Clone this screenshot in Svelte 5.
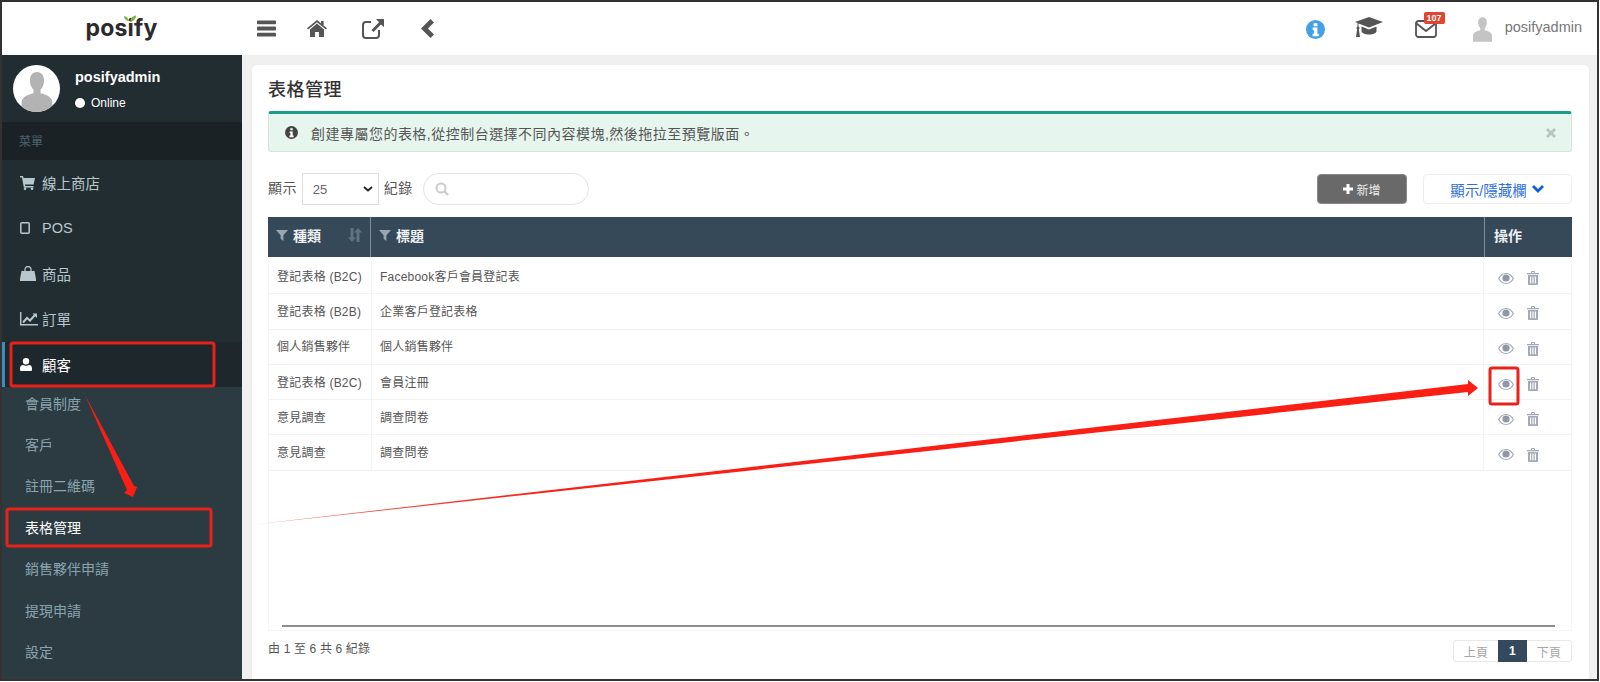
<script>
  const menu = [
    { label: '線上商店', icon: 'cart' },
    { label: 'POS', icon: 'tablet' },
    { label: '商品', icon: 'bag' },
    { label: '訂單', icon: 'chart' },
  ];
  const sub = ['會員制度', '客戶', '註冊二維碼', '表格管理', '銷售夥伴申請', '提現申請', '設定'];
  const rows = [
    ['登記表格 (B2C)', 'Facebook客戶會員登記表'],
    ['登記表格 (B2B)', '企業客戶登記表格'],
    ['個人銷售夥伴', '個人銷售夥伴'],
    ['登記表格 (B2C)', '會員注冊'],
    ['意見調查', '調查問卷'],
    ['意見調查', '調查問卷'],
  ];
</script>

{#snippet funnel()}
  <svg class="funnel" viewBox="0 0 12 12"><path d="M0 1h12L7.4 6.2V12L4.6 9.8V6.2z" fill="currentColor"/></svg>
{/snippet}

{#snippet person(cls)}
  <svg class={cls} viewBox="0 0 20 26"><path d="M10 0c3 0 4.6 2.4 4.6 5.6 0 2.6-1 4.6-2.3 6v2.2c3.6 1 7.7 2.2 7.7 6V26H0v-6.2c0-3.8 4.100-5 7.700-6v-2.200c-1.300-1.400-2.300-3.400-2.300-6C5.400 2.400 7 0 10 0z" fill="currentColor"/></svg>
{/snippet}

<div class="frame">
  <header class="top">
    <div class="brand">
      <span class="logo">posify</span>
      <svg class="leaf" viewBox="0 0 14 7"><path d="M6 7C5 3 3 1 0 1c0 3 2 5 6 6zM7.500 7c0-4 2.500-6 6.500-7 0 4-2 6.500-6.500 7z" fill="#7cb342"/></svg>
    </div>
    <nav class="tools">
      <svg class="t1" viewBox="0 0 20 17"><path d="M1 0h18a1 1 0 0 1 1 1v2a1 1 0 0 1-1 1H1a1 1 0 0 1-1-1V1a1 1 0 0 1 1-1zm0 6.500h18a1 1 0 0 1 1 1v2a1 1 0 0 1-1 1H1a1 1 0 0 1-1-1v-2a1 1 0 0 1 1-1zM1 13h18a1 1 0 0 1 1 1v2a1 1 0 0 1-1 1H1a1 1 0 0 1-1-1v-2a1 1 0 0 1 1-1z" fill="#555"/></svg>
      <svg class="t2" viewBox="0 0 20 17"><path d="M10 0l4 3.300V1h2.600v4.500L20 8.300l-1.100 1.300L10 2.300 1.100 9.600 0 8.300zM10 3.600l7 5.800V17h-5v-5H8v5H3V9.400z" fill="#555"/></svg>
      <svg class="t3" viewBox="0 0 22 20"><path d="M9 3H4a3 3 0 0 0-3 3v10a3 3 0 0 0 3 3h10a3 3 0 0 0 3-3v-5" fill="none" stroke="#555" stroke-width="2"/><path d="M14 0h8v8l-3-2.600-7.500 7.600-2-2L17 3.300z" fill="#555"/></svg>
      <svg class="t4" viewBox="0 0 13 19"><path d="M9.500 0L13 3.400 6.900 9.500 13 15.600 9.500 19 0 9.500z" fill="#555"/></svg>
    </nav>
    <div class="right">
      <svg class="r1" viewBox="0 0 20 20"><circle cx="10" cy="10" r="10" fill="#42a0e4"/><path d="M8 3.500h4v3H8zM7 8h5v6.500h1.500V17h-6.500v-2.500H8.300V10.500H7z" fill="#fff"/></svg>
      <svg class="r2" viewBox="0 0 28 20"><path d="M14 0l14 5-14 5.500L3.500 6.400V9.600c.6.300 1 .9 1 1.500 0 .5-.2 1-.6 1.300L5 20H1l1.100-7.600a1.700 1.700 0 0 1 .4-2.800V6L0 5z" fill="#555"/><path d="M6.500 9.500L14 12.500l7.500-3V14c0 2-3.500 3.500-7.500 3.500S6.500 16 6.500 14z" fill="#555"/></svg>
      <span class="mail">
        <svg viewBox="0 0 22 18"><rect x="1" y="1" width="20" height="16" rx="2.500" fill="none" stroke="#555" stroke-width="1.800"/><path d="M1.500 3.500L11 11l9.500-7.500" fill="none" stroke="#555" stroke-width="1.800"/></svg>
        <b>107</b>
      </span>
      {@render person('topuser')}
      <span class="uname">posifyadmin</span>
    </div>
  </header>

  <div class="body">
    <aside class="side">
      <div class="panel">
        <div class="avatar">{@render person('apic')}</div>
        <div class="who">
          <strong>posifyadmin</strong>
          <span class="status"><i></i>Online</span>
        </div>
      </div>
      <div class="head">菜單</div>
      <ul class="menu">
        {#each menu as m}
          <li>
            <span class="ic">
              {#if m.icon === 'cart'}
                <svg width="15" height="14" viewBox="0 0 15 14"><path d="M0 0h3l.5 2H15l-1.400 6.500H5l.3 1.500h8.200v1.500H3.800L2 1.500H0z" fill="currentColor"/><circle cx="5" cy="12.700" r="1.300" fill="currentColor"/><circle cx="12" cy="12.700" r="1.300" fill="currentColor"/></svg>
              {:else if m.icon === 'tablet'}
                <svg width="10" height="12" viewBox="0 0 10 12"><rect x=".8" y=".8" width="8.400" height="10.400" rx="1" fill="none" stroke="currentColor" stroke-width="1.500"/></svg>
              {:else if m.icon === 'bag'}
                <svg width="16" height="15" viewBox="0 0 16 15"><path d="M5 5V3.500a3 3 0 0 1 6 0V5" fill="none" stroke="currentColor" stroke-width="1.300"/><path d="M1.500 5h13L16 13v2H0v-2z" fill="currentColor"/></svg>
              {:else}
                <svg width="18" height="14" viewBox="0 0 18 14"><path d="M.7 0v12.800H18" fill="none" stroke="currentColor" stroke-width="1.400"/><path d="M3 10.500L7 6l3 2.500L15 3" fill="none" stroke="currentColor" stroke-width="2"/><path d="M12.500 1.500H17V6z" fill="currentColor"/></svg>
              {/if}
            </span>
            {m.label}
          </li>
        {/each}
        <li class="active">
          <span class="ic"><svg width="12" height="13" viewBox="0 0 12 13"><path d="M6 0a3.200 3.200 0 0 1 3.200 3.300A3.200 3.200 0 0 1 6 6.500a3.200 3.200 0 0 1-3.200-3.200A3.200 3.200 0 0 1 6 0zM3 7c1.800 1 4.200 1 6 0 2 .2 3 1.500 3 3.500V12a1 1 0 0 1-1 1H1a1 1 0 0 1-1-1v-1.500C0 8.500 1 7.200 3 7z" fill="currentColor"/></svg></span>
          顧客
        </li>
      </ul>
      <ul class="sub">
        {#each sub as s}
          <li class:on={s === '表格管理'}>{s}</li>
        {/each}
      </ul>
    </aside>

    <main class="content">
      <section class="card">
        <h1>表格管理</h1>
        <div class="alert">
          <svg class="ainfo" viewBox="0 0 14 14"><circle cx="7" cy="7" r="7" fill="#444"/><path d="M5.700 2.300h2.600v2.200H5.700zM5 5.800h3.300v4.500h1V12H4.800v-1.700h1V7.500H5z" fill="#fff"/></svg>
          <span>創建專屬您的表格,從控制台選擇不同內容模塊,然後拖拉至預覽版面。</span>
          <svg class="aclose" viewBox="0 0 10 10"><path d="M2 0l3 3 3-3 2 2-3 3 3 3-2 2-3-3-3 3-2-2 3-3-3-3z" fill="#b9c6c0"/></svg>
        </div>

        <div class="filters">
          <span class="lbl">顯示</span>
          <span class="select">25<svg viewBox="0 0 10 6"><path d="M1 1l4 3.500L9 1" fill="none" stroke="#222" stroke-width="1.800"/></svg></span>
          <span class="lbl">紀錄</span>
          <span class="search"><svg viewBox="0 0 14 14"><circle cx="6" cy="6" r="4.500" fill="none" stroke="#ccc" stroke-width="2"/><path d="M9.500 9.500L13 13" stroke="#ccc" stroke-width="2.400"/></svg></span>
          <span class="grow"></span>
          <button class="add"><svg viewBox="0 0 10 10"><path d="M3.500 0h3v3.500H10v3H6.500V10h-3V6.500H0v-3h3.500z" fill="#fff"/></svg>新增</button>
          <button class="cols">顯示/隱藏欄<svg viewBox="0 0 14 9"><path d="M2 1l5 5 5-5" fill="none" stroke="#0f5fd6" stroke-width="2.800"/></svg></button>
        </div>

        <div class="table">
          <div class="thead">
            <div class="c1">{@render funnel()}種類<svg class="sort" viewBox="0 0 14 14"><path d="M2.500 0h3v9.500H8L4 14 0 9.500h2.500zM8.500 14h3V4.500H14L10 0 6 4.500h2.500z" fill="#5d7282"/></svg></div>
            <div class="c2">{@render funnel()}標題</div>
            <div class="c3">操作</div>
          </div>
          <div class="tbody">
            {#each rows as r}
              <div class="row">
                <div class="c1">{r[0]}</div>
                <div class="c2">{r[1]}</div>
                <div class="c3">
                  <svg class="eye" viewBox="0 0 16 11"><path d="M8 0c3.500 0 6.300 2.200 8 5.500C14.300 8.800 11.500 11 8 11S1.700 8.800 0 5.500C1.700 2.200 4.500 0 8 0zM8 1C5 1 2.800 2.800 1.300 5.500 2.800 8.200 5 10 8 10s5.200-1.800 6.700-4.500C13.200 2.800 11 1 8 1z" fill="#a3a9b8"/><circle cx="8" cy="5" r="3.600" fill="#9097a8"/></svg>
                  <svg class="trash" viewBox="0 0 12 14"><path d="M4 2V.8C4 .3 4.300 0 4.800 0h2.400c.5 0 .8.300.8.800V2h4v1.300H0V2zM5 1v1h2V1zM1 4h10v9c0 .6-.4 1-1 1H2c-.6 0-1-.4-1-1zM3 5.500V12.300h1.200V5.500zM5.400 5.500V12.300h1.200V5.500zM7.800 5.500V12.300H9V5.500z" fill="#a3a9b8" fill-rule="evenodd"/></svg>
                </div>
              </div>
            {/each}
          </div>
          <div class="scroll"></div>
        </div>

        <div class="foot">
          <span>由 1 至 6 共 6 紀錄</span>
          <div class="pager"><span>上頁</span><span class="cur">1</span><span>下頁</span></div>
        </div>
      </section>
    </main>
  </div>

  <svg class="marks" viewBox="0 0 1600 682" width="1600" height="682">
    <defs>
      <linearGradient id="tail" x1="241" y1="0" x2="560" y2="0" gradientUnits="userSpaceOnUse">
        <stop offset="0" stop-color="#ee6a62"/><stop offset="1" stop-color="#fb1e14"/>
      </linearGradient>
    </defs>
    <polygon points="241,526 1468,384 1468,380 1478,388 1468,396 1468,392" fill="url(#tail)"/>
    <polygon points="85,395 134,486 137,487 133,497 124,493 127,490" fill="#fb1e14"/>
    <rect x="11" y="343" width="203" height="43" rx="2" fill="none" stroke="#e8211a" stroke-width="3"/>
    <rect x="7" y="509" width="204" height="37" rx="2" fill="none" stroke="#e8211a" stroke-width="3"/>
    <rect x="1490" y="368" width="28" height="36" rx="2" fill="none" stroke="#e8211a" stroke-width="3"/>
  </svg>
</div>

<style>
  :global(body) {
    margin: 0;
    background: #fff;
    font-family: "Liberation Sans", "Noto Sans CJK TC", sans-serif;
  }
  .frame {
    position: relative;
    box-sizing: border-box;
    width: 1599px;
    height: 681px;
    border: 2px solid #333;
    display: flex;
    flex-direction: column;
    overflow: hidden;
    background: #f0f0f0;
  }
  .top {
    flex: 0 0 53px;
    display: flex;
    align-items: center;
    background: #fff;
  }
  .brand {
    position: relative;
    width: 239px;
    text-align: center;
  }
  .logo {
    font-family: "Inter", sans-serif;
    font-weight: 700;
    font-size: 23px;
    color: #2b2b2b;
    letter-spacing: 0.2px;
    position: relative;
    top: -1px;
  }
  .leaf {
    position: absolute;
    width: 12px;
    height: 7px;
    left: 122px;
    top: 0;
  }
  .tools {
    display: flex;
    align-items: center;
    padding-left: 16px;
  }
  .t1 { width: 19px; height: 17px; }
  .t2 { width: 20px; height: 17px; margin-left: 31px; }
  .t3 { width: 22px; height: 20px; margin-left: 35px; }
  .t4 { width: 13px; height: 19px; margin-left: 37px; }
  .right {
    margin-left: auto;
    display: flex;
    align-items: center;
    padding-right: 15px;
  }
  .r1 { width: 19px; height: 19px; position: relative; top: 1px; }
  .r2 { width: 28px; height: 20px; margin-left: 30px; position: relative; top: -2px; }
  .mail { position: relative; display: block; width: 22px; height: 18px; margin-left: 32px; }
  .mail svg { width: 22px; height: 18px; display: block; }
  .mail b {
    position: absolute;
    left: 9px;
    top: -8px;
    width: 21px;
    height: 12px;
    border-radius: 2px;
    background: #e0452f;
    color: #fff;
    font-size: 9px;
    line-height: 12px;
    text-align: center;
  }
  :global(.topuser) { width: 19px; height: 25px; margin-left: 36px; color: #c4c4c4; position: relative; top: 1px; }
  .uname { margin-left: 13px; font-size: 14.500px; color: #777; position: relative; top: -2px; }

  .body { flex: 1; display: flex; min-height: 0; }
  .side {
    width: 240px;
    flex: none;
    background: #222d32;
    color: #b8c7ce;
    display: flex;
    flex-direction: column;
  }
  .panel {
    height: 67px;
    flex: none;
    display: flex;
    align-items: center;
    padding-left: 11px;
    box-sizing: border-box;
  }
  .avatar {
    width: 47px;
    height: 47px;
    border-radius: 50%;
    background: #fff;
    overflow: hidden;
    display: flex;
    justify-content: center;
    align-items: flex-end;
  }
  :global(.apic) { width: 32px; height: 40px; color: #b3b3b3; }
  .who { margin-left: 15px; display: flex; flex-direction: column; gap: 11px; margin-top: 1px; }
  .who strong { color: #fff; font-size: 14.500px; }
  .status { font-size: 12px; color: #fff; display: flex; align-items: center; }
  .status i { width: 10px; height: 10px; border-radius: 50%; background: #fff; margin-right: 6px; }
  .head {
    height: 38px;
    flex: none;
    line-height: 40px;
    background: #1a2226;
    color: #4b646f;
    font-size: 12px;
    padding-left: 17px;
  }
  ul { list-style: none; margin: 0; padding: 0; }
  .menu li {
    height: 45.400px;
    display: flex;
    align-items: center;
    padding-left: 18px;
    font-size: 14.500px;
    color: #b8c7ce;
    box-sizing: border-box;
  }
  .ic { width: 22px; display: flex; align-items: center; }
  .menu li.active {
    background: #1e282c;
    color: #fff;
    border-left: 3px solid #3c8dbc;
    padding-left: 15px;
    height: 45px;
  }
  .sub { background: #2c3b41; flex: 1; }
  .sub li {
    height: 41.400px;
    line-height: 34px;
    padding-left: 23px;
    font-size: 14px;
    color: #8aa4af;
  }
  .sub li.on { color: #fff; }

  .content { flex: 1; padding: 10px 8px 0 10px; min-width: 0; }
  .card {
    background: #fff;
    height: 100%;
    border-radius: 5px 5px 0 0;
    padding: 0 17px 0 16px;
    box-sizing: border-box;
    display: flex;
    flex-direction: column;
    box-shadow: 0 0 2px #e6e6e6;
  }
  h1 {
    margin: 0;
    height: 46px;
    line-height: 51px;
    font-size: 18px;
    letter-spacing: 0.5px;
    font-weight: 500;
    color: #333;
  }
  .alert {
    height: 41px;
    box-sizing: border-box;
    border: 1px solid #d2e6de;
    border-top: 3px solid #1a9c8c;
    border-radius: 3px;
    background: #e6f5ee;
    display: flex;
    align-items: center;
    padding-left: 16px;
    padding-right: 15px;
    font-size: 14px;
    letter-spacing: 0.48px;
    color: #555;
  }
  .ainfo { width: 13px; height: 13px; margin-right: 13px; flex: none; }
  .aclose { width: 10px; height: 10px; margin-left: auto; }
  .filters {
    height: 32px;
    margin-top: 21px;
    display: flex;
    align-items: center;
    font-size: 14px;
    letter-spacing: 0.4px;
    color: #555;
  }
  .lbl { position: relative; top: -2px; }
  .select {
    box-sizing: border-box;
    width: 77px;
    height: 32px;
    margin: 0 5px;
    border: 1px solid #ddd;
    padding-left: 10px;
    display: flex;
    align-items: center;
    justify-content: space-between;
    font-size: 13px;
    letter-spacing: 0;
    color: #666;
  }
  .select svg { width: 10px; height: 6px; margin-right: 5px; }
  .search {
    box-sizing: border-box;
    width: 166px;
    height: 32px;
    margin-left: 10px;
    border: 1px solid #e4e4e4;
    border-radius: 16px;
    display: flex;
    align-items: center;
    padding-left: 11px;
  }
  .search svg { width: 14px; height: 14px; }
  .grow { flex: 1; }
  button { font-family: inherit; cursor: pointer; }
  .add {
    width: 90px;
    height: 30px;
    border: 1px solid #888;
    border-radius: 4px;
    background: #696969;
    color: #eee;
    font-size: 12px;
    display: flex;
    align-items: center;
    justify-content: center;
    gap: 3px;
  }
  .add svg { width: 10px; height: 10px; }
  .cols {
    width: 149px;
    height: 30px;
    margin-left: 16px;
    border: 1px solid #eee;
    border-radius: 4px;
    background: #fff;
    color: #2f6fdc;
    font-size: 14.500px;
    display: flex;
    align-items: center;
    justify-content: center;
    gap: 4px;
  }
  .cols svg { width: 14px; height: 9px; }

  .table {
    margin-top: 12px;
    flex: 1;
    display: flex;
    flex-direction: column;
    min-height: 0;
    border-left: 1px solid #f6f6f6;
    border-right: 1px solid #f6f6f6;
  }
  .thead, .row { display: grid; grid-template-columns: 102px 1fr 88px; }
  .thead {
    height: 40px;
    background: #364958;
    color: #eef1f3;
    font-size: 14px;
    font-weight: 700;
    align-items: stretch;
    margin-left: -1px;
    margin-right: -1px;
  }
  .thead > div {
    display: flex;
    align-items: center;
    padding-left: 8px;
    padding-bottom: 4px;
    box-sizing: border-box;
    border-left: 1px solid #7e909c;
    position: relative;
  }
  .thead > div:first-child { border-left: 0; }
  .thead .c3 { padding-left: 9px; }
  .funnel { width: 12px; height: 12px; color: #9aa7b1; margin-right: 5px; }
  .sort { position: absolute; right: 8px; top: 11px; width: 14px; height: 14px; }
  .tbody { padding-top: 2px; }
  .row {
    height: 35.300px;
    border-bottom: 1px solid #f3f3f3;
    box-sizing: border-box;
    font-size: 12px;
    color: #555;
    letter-spacing: 0.22px;
  }
  .row > div {
    display: flex;
    align-items: center;
    padding-left: 8px;
    padding-bottom: 2px;
    border-left: 1px solid #f5f5f5;
  }
  .row > div:first-child { border-left: 0; }
  .row .c3 { padding-left: 14px; padding-bottom: 0; padding-top: 4px; gap: 13px; }
  .eye { width: 16px; height: 11px; }
  .trash { width: 12px; height: 14px; }
  .scroll {
    margin: auto 16px 3px 13px;
    height: 2px;
    background: #8c8c8c;
  }
  .foot {
    flex: 0 0 48px;
    display: flex;
    align-items: flex-start;
    justify-content: space-between;
    font-size: 12px;
    letter-spacing: 0.15px;
    color: #555;
    border-top: 1px solid #f6f6f6;
  }
  .foot > span { margin-top: 8px; }
  .pager {
    display: flex;
    margin-top: 9px;
    height: 22px;
    border: 1px solid #e8e8e8;
    border-radius: 3px;
    box-sizing: border-box;
    font-size: 12px;
    color: #a6a6a6;
    align-items: stretch;
  }
  .pager span { width: 44px; display: flex; align-items: center; justify-content: center; }
  .pager .cur { width: 29px; background: #34495e; color: #fff; font-weight: 700; margin: -1px 0; }
  .marks { position: absolute; left: -2px; top: -2px; pointer-events: none; }
</style>
